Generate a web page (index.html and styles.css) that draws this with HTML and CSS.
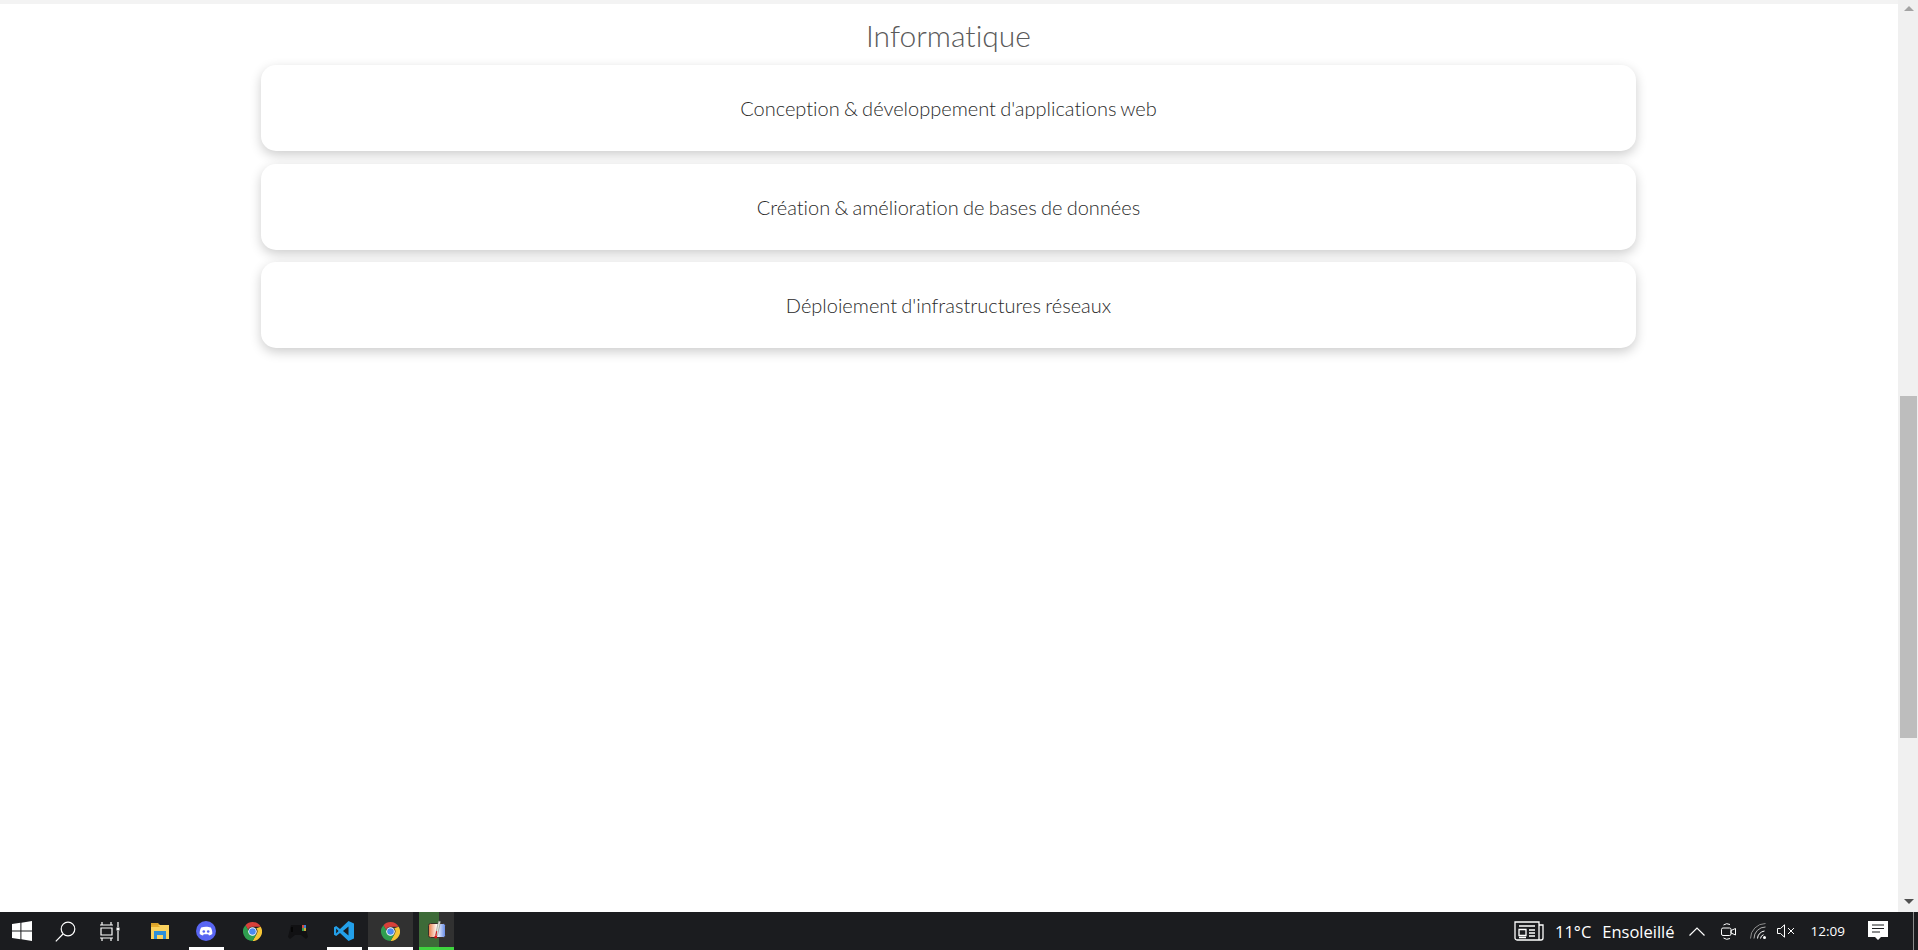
FILE: index.html
```html
<!DOCTYPE html>
<html lang="fr">
<head>
<meta charset="utf-8">
<title>Informatique</title>
<link rel="stylesheet" href="styles.css">
</head>
<body>
<div class="screen">
  <div class="viewport">
    <main class="page">
      <div class="top-strip"></div>
      <section class="skills">
        <h2 class="skills-title">Informatique</h2>
        <div class="card">Conception &amp; développement d'applications web</div>
        <div class="card">Création &amp; amélioration de bases de données</div>
        <div class="card">Déploiement d'infrastructures réseaux</div>
      </section>
    </main>
    <aside class="scrollbar">
      <svg class="arrow" width="10" height="5" viewBox="0 0 10 5"><path d="M0 0h10L5 5z" fill="#a3a3a3"/></svg>
      <div class="thumb"></div>
      <svg class="arrow" width="10" height="5" viewBox="0 0 10 5"><path d="M0 0h10L5 5z" fill="#505050"/></svg>
    </aside>
  </div>
  <footer class="taskbar">
    <div class="cell cell-start">
      <svg width="20" height="20" viewBox="0 0 20 20"><path d="M0 3l8.400-1.200v7.700H0zM9.400 1.700L20 0v9.500H9.400zM0 10.500h8.400v7.700L0 17zM9.400 10.500H20V20L9.400 18.300z" fill="#fff"/></svg>
    </div>
    <div class="cell cell-search">
      <svg width="21" height="21" viewBox="0 0 21 21" fill="none" stroke="#fff" stroke-width="1.200"><circle cx="13" cy="8" r="6.800"/><path d="M8 13L.8 20.300"/></svg>
    </div>
    <div class="cell cell-tasks">
      <svg width="20" height="19" viewBox="0 0 20 19" fill="none" stroke="#fff" stroke-width="1.200"><path d="M0 3h13M2 0v3M11 0v3M1 6h11v7H1zM0 16h13M2 16v3M11 16v3M18 0v5M18 9v10"/><rect x="16.500" y="5.500" width="3" height="3" fill="#fff" stroke="none"/></svg>
    </div>
    <div class="cell cell-explorer">
      <svg width="18" height="16" viewBox="0 0 18 16"><path d="M0 0h7l2 2H0z" fill="#d9a22b"/><path d="M0 2h18v14H0z" fill="#fbd25e"/><path d="M0 2h7L9 4H0z" fill="#e8ad2c"/><path d="M3 8h12v8h-3v-4H6v4H3z" fill="#2f8fd8"/></svg>
    </div>
    <div class="cell cell-app marked">
      <svg width="20" height="20" viewBox="0 0 20 20"><circle cx="10" cy="10" r="10" fill="#5865f2"/><path d="M5.200 6.600C7.800 5.300 12.200 5.300 14.800 6.600 16 8.600 16.500 10.800 16.300 13 15.200 13.800 14.200 14.200 13 14.500L12.300 13.300H7.700L7 14.500C5.800 14.200 4.800 13.800 3.700 13 3.500 10.800 4 8.600 5.200 6.600Z" fill="#fff"/><circle cx="7.800" cy="10.500" r="1.300" fill="#5865f2"/><circle cx="12.200" cy="10.500" r="1.300" fill="#5865f2"/></svg>
    </div>
    <div class="cell cell-app">
      <svg width="19" height="19" viewBox="0 0 20 20"><path d="M10 0a10 10 0 0 1 8.700 5H10a5 5 0 0 0-4.700 3.300L2.600 3.300A10 10 0 0 1 10 0z" fill="#d8403a"/><path d="M18.700 5A10 10 0 0 1 10 20l4.300-7.500A5 5 0 0 0 14 6.500z" fill="#f6c535"/><path d="M2.600 3.300L7 11a5 5 0 0 0 7.300 1.500L10 20A10 10 0 0 1 2.600 3.300z" fill="#2f9e4f"/><circle cx="10" cy="10" r="4.500" fill="#fff"/><circle cx="10" cy="10" r="3.500" fill="#4a8af0"/></svg>
    </div>
    <div class="cell cell-app">
      <svg width="20" height="16" viewBox="0 0 20 16"><path d="M3 2h14l3 12-2 2-5-4H7l-5 4-2-2z" fill="#111113"/><rect x="3" y="4" width="2" height="5" fill="#060606"/><rect x="14" y="2" width="2" height="3" fill="#d04a3a"/><rect x="16" y="2" width="2" height="3" fill="#3a7fd0"/><rect x="14" y="5" width="2" height="3" fill="#3a9d50"/><rect x="16" y="5" width="2" height="3" fill="#d0a83a"/></svg>
    </div>
    <div class="cell cell-app marked">
      <svg width="20" height="20" viewBox="0 0 20 20"><path d="M14.500 0L20 2.500v15L14.500 20 6 12l-3.800 3L0 13.800V6.200L2.200 5 6 8z" fill="#23a0ea"/><path d="M14.500 5.500L9 10l5.500 4.500z" fill="#1b1c1f"/><path d="M2.200 7.500L4.500 10l-2.300 2.500z" fill="#1b1c1f"/></svg>
    </div>
    <div class="cell cell-chrome">
      <svg width="19" height="19" viewBox="0 0 20 20"><path d="M10 0a10 10 0 0 1 8.700 5H10a5 5 0 0 0-4.700 3.300L2.600 3.300A10 10 0 0 1 10 0z" fill="#d8403a"/><path d="M18.700 5A10 10 0 0 1 10 20l4.300-7.500A5 5 0 0 0 14 6.500z" fill="#f6c535"/><path d="M2.600 3.300L7 11a5 5 0 0 0 7.300 1.500L10 20A10 10 0 0 1 2.600 3.300z" fill="#2f9e4f"/><circle cx="10" cy="10" r="4.500" fill="#fff"/><circle cx="10" cy="10" r="3.500" fill="#4a8af0"/></svg>
    </div>
    <div class="cell cell-flash">
      <svg width="18" height="22" viewBox="0 0 18 22"><defs><linearGradient id="flash-bg" x1="0" x2="1" y1="0" y2="0"><stop offset="0" stop-color="#e8783f"/><stop offset=".5" stop-color="#fff"/><stop offset="1" stop-color="#5f86e6"/></linearGradient></defs><rect x=".5" y="3.500" width="17" height="14" rx="2" fill="url(#flash-bg)" stroke="#3a3028"/><path d="M10.500 1l2 .5-3 14-2-.5z" fill="#e4e6e0" stroke="#6d7a68" stroke-width=".5"/><path d="M8.200 11l1 .3-.8 4.700-1-.3z" fill="#d81818"/><circle cx="7.800" cy="17" r="1.500" fill="#d81818"/></svg>
    </div>
    <div class="tray">
      <svg class="tray-news" width="30" height="20" viewBox="0 0 30 20" fill="none" stroke="#fff" stroke-width="1.300"><path d="M1 1h24v18H3a2 2 0 0 1-2-2zM25 4h4v13a2 2 0 0 1-2 2h-2"/><path d="M5 5h16M5 8.500h7v6H5zM15 9h6M15 12h6M15 15h6M5 16.500h7"/></svg>
      <span class="weather-temp">11°C</span>
      <span class="weather-label">Ensoleillé</span>
      <svg class="tray-chevron" width="16" height="9" viewBox="0 0 16 9" fill="none" stroke="#fff" stroke-width="1.200"><path d="M.5 8.500L8 1l7.500 7.500"/></svg>
      <svg class="tray-camera" width="15" height="19" viewBox="0 0 15 19" fill="none" stroke="#fff" stroke-width="1"><rect x=".5" y="6" width="9.500" height="7.500" rx="1.500"/><path d="M10 8.500l4.500-2v6.500l-4.500-2zM2.500 3A6 6 0 0 1 9 2.500M2.500 16A6 6 0 0 0 9 16.500"/></svg>
      <svg class="tray-wifi" width="16" height="16" viewBox="0 0 16 16" fill="none" stroke="#fff" stroke-width="1"><path d="M.5 15.500A15 15 0 0 1 15.500.5" stroke="#8d8d8d"/><path d="M4 15.500A11.500 11.500 0 0 1 15.500 4" stroke="#b0b0b0"/><path d="M7.500 15.500a8 8 0 0 1 7-7.500"/><path d="M10.500 15.500a4.500 4.500 0 0 1 3-3.800"/><circle cx="14.500" cy="14.500" r="1.500" fill="#fff" stroke="none"/></svg>
      <svg class="tray-sound" width="18" height="14" viewBox="0 0 18 14" fill="none" stroke="#fff" stroke-width="1"><path d="M.5 4.500h3L7.500.8v12.400l-4-3.700h-3zM11 4l6 6M17 4l-6 6"/></svg>
      <span class="clock">12:09</span>
      <svg class="tray-notify" width="20" height="20" viewBox="0 0 20 20"><path d="M0 0h20v16h-7l-3 3-3-3H0z" fill="#fff"/><path d="M4 4h12M4 7.500h12M4 11h8" stroke="#1b1c1f" stroke-width="1"/></svg>
      <div class="show-desktop"></div>
    </div>
  </footer>
</div>
</body>
</html>
```
FILE: styles.css
```css
* { box-sizing: border-box; }
html, body { margin: 0; height: 100%; overflow: hidden; background: #fff; }

.screen { display: flex; flex-direction: column; width: 1918px; height: 950px; }
.viewport { display: flex; height: 912px; }

.page { width: 1898px; display: flex; flex-direction: column; }
.top-strip { height: 4px; background: #f3f3f3; }
.skills { width: 1375px; margin-left: 261px; }
.skills-title {
  margin: 0;
  height: 61px;
  padding-top: 14px;
  text-align: center;
  font: 300 30px/34px "Lato Light", Lato, sans-serif;
  font-variant-ligatures: none;
  color: #5a5a5a;
}
.card {
  height: 86px;
  margin-bottom: 12.5px;
  display: flex;
  align-items: center;
  justify-content: center;
  background: #fff;
  border-radius: 15px;
  box-shadow: 0 4px 12px rgba(0, 0, 0, .2);
  font: 300 20px/24px "Lato Light", Lato, sans-serif;
  font-variant-ligatures: none;
  word-spacing: -1.2px;
  color: #2a2a2a;
}

.scrollbar {
  width: 20px;
  padding: 6px 1px 8px 2px;
  display: flex;
  flex-direction: column;
  align-items: center;
  background: #f0f0f0;
}
.arrow { flex: none; }
.arrow:first-child { transform: rotate(180deg); }
.thumb { width: 17px; height: 342px; margin: 385px 0 auto; background: #bdbdbd; }

.taskbar { display: flex; height: 38px; background: #1b1c1f; }
.cell { display: flex; align-items: center; justify-content: center; height: 38px; padding-top: 3px; border-bottom: 3px solid transparent; }
.cell-start { width: 43px; }
.cell-search { width: 45px; }
.cell-tasks { width: 44px; }
.cell-explorer { width: 46px; margin-left: 5px; }
.cell-app { width: 46px; }
.cell-app.marked { width: 35px; margin: 0 5.5px; border-bottom-color: #fff; }
.cell-chrome { width: 45px; margin-left: 1px; padding-right: 1px; background: #313131; border-bottom-color: #fff; }
.cell-flash {
  width: 35px;
  margin-left: 6px;
  background: linear-gradient(90deg, #3d6b38 0 20px, #313131 20px);
  border-bottom-color: #3fd43f;
}

.tray { display: flex; align-items: center; position: relative; margin-left: auto; height: 38px; padding-right: 30px; color: #fff; font-family: "Open Sans", sans-serif; }
.weather-temp { margin-left: 11px; font-size: 16.5px; }
.weather-label { margin-left: 11px; font-size: 16.5px; }
.tray-chevron { margin-left: 14px; }
.tray-camera { margin-left: 16px; }
.tray-wifi { margin-left: 14px; }
.tray-sound { margin-left: 11px; }
.clock { margin-left: 16px; font-size: 13.5px; }
.tray-notify { margin-left: 23px; }
.show-desktop { position: absolute; top: 0; bottom: 0; right: 4px; width: 1px; background: #8a8a8a; }
```
